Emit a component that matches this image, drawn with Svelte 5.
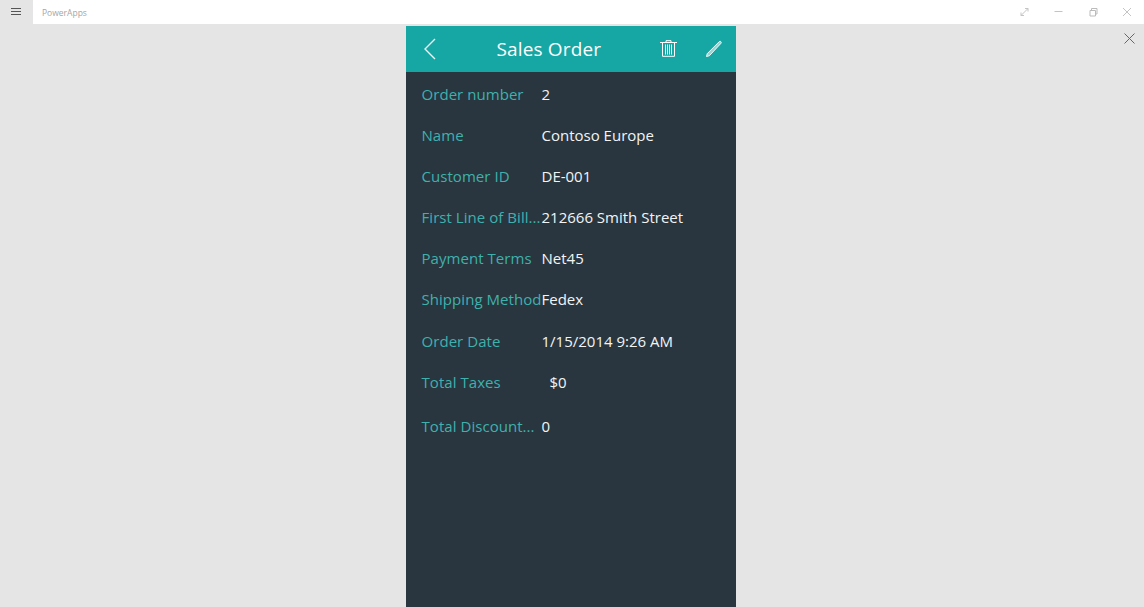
<script lang="ts">
  const rows = [
    { label: "Order number", value: "2" },
    { label: "Name", value: "Contoso Europe" },
    { label: "Customer ID", value: "DE-001" },
    { label: "First Line of Bill...", value: "212666 Smith Street" },
    { label: "Payment Terms", value: "Net45" },
    { label: "Shipping Method", value: "Fedex" },
    { label: "Order Date", value: "1/15/2014 9:26 AM" },
    { label: "Total Taxes", value: "$0", indent: true },
    { label: "Total Discount...", value: "0", last: true },
  ];
</script>

<div class="window">
  <header class="titlebar">
    <button class="menu" aria-label="Menu">
      <svg width="10" height="8" viewBox="0 0 10 8"><path d="M0 .5h10M0 3.5h10M0 6.500h10" stroke="#555" fill="none" /></svg>
    </button>
    <span class="app-name">PowerApps</span>
    <div class="controls">
      <svg width="34" height="24" viewBox="0 0 34 24"><path d="M13 15.500l7-7M17 8.500h3v3M13 12.500v3h3" stroke="#c4c4c4" fill="none" /></svg>
      <svg width="34" height="24" viewBox="0 0 34 24"><path d="M12.500 11.500h8" stroke="#c4c4c4" fill="none" /></svg>
      <svg width="34" height="24" viewBox="0 0 34 24"><path d="M14 10.500h5.500v5.500H14zM15.500 10.500V8.500h5.500v5.500h-1.500" stroke="#bbb" fill="none" /></svg>
      <svg width="34" height="24" viewBox="0 0 34 24"><path d="M13 8l8 8M21 8l-8 8" stroke="#c4c4c4" fill="none" /></svg>
    </div>
  </header>

  <main class="stage">
    <button class="close" aria-label="Close">
      <svg width="11" height="11" viewBox="0 0 11 11"><path d="M.5.500l10 10M10.500.500l-10 10" stroke="#666" fill="none" /></svg>
    </button>

    <section class="phone">
      <div class="bar">
        <svg class="back" width="14" height="22" viewBox="0 0 14 22"><path d="M12 1L2 11l10 10" stroke="#e8f7f6" stroke-width="1.400" fill="none" /></svg>
        <h1>Sales Order</h1>
        <svg class="trash" width="17" height="17" viewBox="0 0 17 17">
          <path d="M0 2.500h17M6 2V.700h5V2M2.500 2.500v13.800h12V2.500M5.500 4.500v10M7.500 4.500v10M9.500 4.500v10M11.500 4.500v10" stroke="#fff" stroke-width="1" fill="none" />
        </svg>
        <svg class="pencil" width="18" height="18" viewBox="0 0 18 18">
          <path d="M1.500 16.500l.7-2.800L14.200 1.700c.6-.5 1.200-.5 1.700 0s.5 1.100 0 1.700L4.300 15.800z" stroke="#fff" stroke-width=".9" fill="#e6f7f6" fill-opacity=".6" />
        </svg>
      </div>

      <div class="rows">
        {#each rows as row}
          <div class="row" class:last={row.last}>
            <span class="label">{row.label}</span>
            <span class="value" class:indent={row.indent}>{row.value}</span>
          </div>
        {/each}
      </div>
    </section>
  </main>
</div>

<style>
  :global(body) {
    background: #e5e5e5;
  }

  .window {
    height: 607px;
    display: flex;
    flex-direction: column;
    overflow: hidden;
    font-family: "Open Sans", sans-serif;
  }

  .titlebar {
    height: 24px;
    flex: none;
    display: flex;
    align-items: center;
    background: #fff;
  }

  .menu {
    width: 33px;
    height: 24px;
    padding: 0 2px 0 0;
    border: none;
    background: #e5e5e5;
    display: flex;
    align-items: center;
    justify-content: center;
  }

  .app-name {
    margin-left: 9px;
    font-size: 8.5px;
    color: #a5a5a5;
  }

  .controls {
    margin-left: auto;
    display: flex;
  }

  .stage {
    flex: 1;
    position: relative;
    display: flex;
    justify-content: center;
    padding: 2px 2px 0 0;
    background: #e5e5e5;
  }

  .close {
    position: absolute;
    top: 9px;
    right: 9px;
    padding: 0;
    border: none;
    background: none;
    display: flex;
  }

  .phone {
    width: 330px;
    background: #29363f;
    display: flex;
    flex-direction: column;
  }

  .bar {
    height: 45.500px;
    flex: none;
    display: flex;
    align-items: center;
    background: #16a6a3;
    color: #fff;
    padding: 0 13px 0 17px;
  }

  .back {
    flex: none;
  }

  h1 {
    margin: 0 0 0 59.500px;
    font-size: 19px;
    font-weight: 400;
    letter-spacing: 0.15px;
    white-space: nowrap;
  }

  .trash {
    margin-left: auto;
  }

  .pencil {
    margin-left: 28px;
  }

  .rows {
    display: flex;
    flex-direction: column;
    padding: 11.050px 0 0 15.500px;
  }

  .row {
    height: 41.200px;
    display: flex;
    align-items: flex-start;
    font-size: 15px;
    line-height: 22px;
  }

  .row.last {
    margin-top: 2.500px;
  }

  .label {
    width: 120px;
    flex: none;
    color: #3fb1ad;
    line-height: 23px;
    white-space: nowrap;
    letter-spacing: 0.05px;
  }

  .value {
    color: #f2f4f4;
    white-space: nowrap;
  }

  .value.indent {
    margin-left: 8px;
  }
</style>
